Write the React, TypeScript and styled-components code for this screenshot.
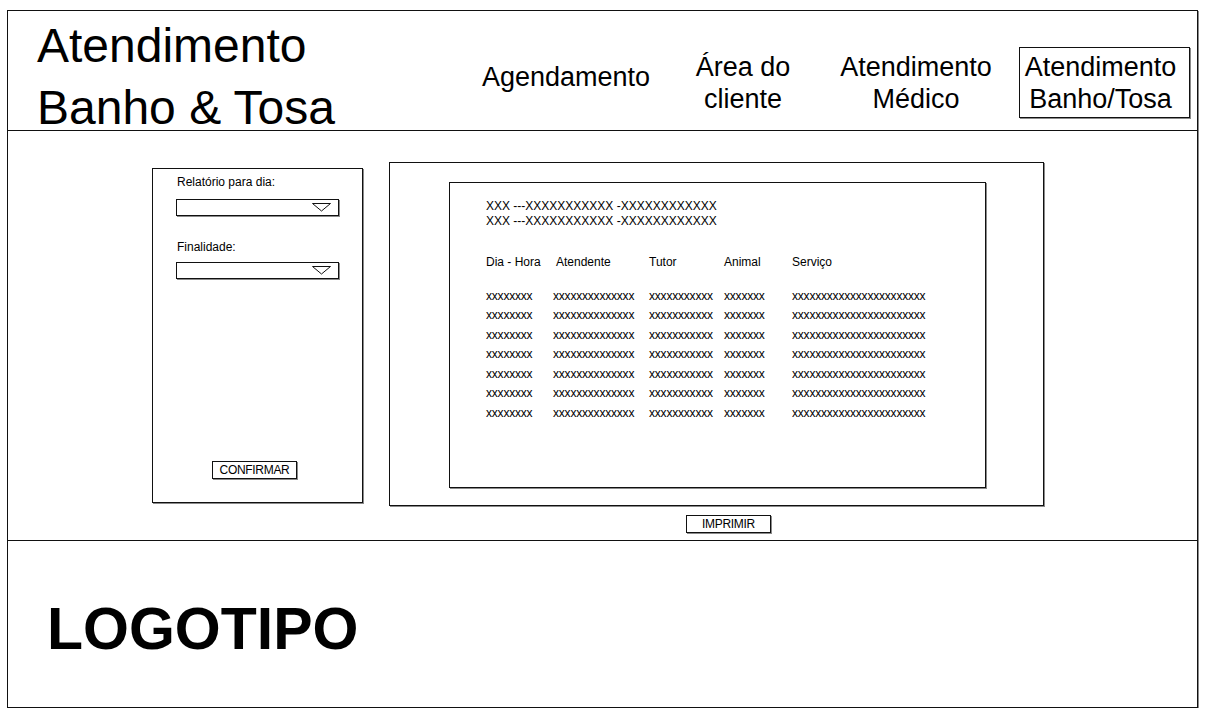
import React from "react";
import styled, { createGlobalStyle } from "styled-components";

const GlobalStyle = createGlobalStyle`
  html, body {
    margin: 0;
    padding: 0;
    background: #fff;
  }
  body {
    font-family: "Liberation Sans", Arial, sans-serif;
    color: #000;
  }
`;

const Frame = styled.div`
  box-sizing: border-box;
  width: 1191px;
  height: 698px;
  margin: 10px 0 0 7px;
  border: 1px solid #111;
  box-shadow: 1px 1px 0 #8a8a8a;
  display: flex;
  flex-direction: column;
`;

const Header = styled.header`
  box-sizing: border-box;
  height: 120px;
  flex-shrink: 0;
  border-bottom: 1px solid #111;
  display: flex;
  justify-content: space-between;
  padding: 0 7px 0 29px;
`;

const Title = styled.h1`
  margin: 0;
  padding-top: 4px;
  font-size: 48px;
  font-weight: 400;
  line-height: 62px;
  white-space: nowrap;
  span {
    display: block;
  }
`;

const Nav = styled.nav`
  display: flex;
  align-items: center;
  align-self: flex-end;
  margin-bottom: 12px;
`;

const NavItem = styled.div<{ $w: number; $active?: boolean; $lift?: number }>`
  box-sizing: border-box;
  width: ${(p) => p.$w}px;
  font-size: 27px;
  line-height: 32px;
  text-align: center;
  white-space: nowrap;
  margin-bottom: ${(p) => p.$lift ?? 0}px;
  ${(p) =>
    p.$active &&
    `
    border: 1px solid #111;
    box-shadow: 1px 1px 0 #8a8a8a;
    padding: 3px 8px 2px 0;
  `}
  span {
    display: block;
  }
`;

const Main = styled.main`
  box-sizing: border-box;
  height: 410px;
  flex-shrink: 0;
  border-bottom: 1px solid #111;
  display: flex;
  align-items: flex-start;
  gap: 26px;
  padding-left: 144px;
`;

const FilterPanel = styled.section`
  box-sizing: border-box;
  width: 211px;
  height: 335px;
  margin-top: 37px;
  border: 1px solid #111;
  box-shadow: 1px 1px 0 #8a8a8a;
  padding: 6px 0 0 23px;
  display: flex;
  flex-direction: column;
  align-items: flex-start;
`;

const Label = styled.div<{ $mt?: number }>`
  font-size: 12px;
  line-height: 14px;
  margin-top: ${(p) => p.$mt ?? 0}px;
  padding-left: 1px;
`;

const Select = styled.div<{ $mt: number }>`
  box-sizing: border-box;
  width: 163px;
  height: 17px;
  margin-top: ${(p) => p.$mt}px;
  border: 1px solid #111;
  box-shadow: 1px 1px 0 #8a8a8a;
  display: flex;
  align-items: center;
  justify-content: flex-end;
  padding-right: 7px;
`;

const Button = styled.div`
  box-sizing: border-box;
  width: 85px;
  height: 18px;
  border: 1px solid #111;
  box-shadow: 1px 1px 0 #8a8a8a;
  font-size: 12px;
  line-height: 16px;
  text-align: center;
  letter-spacing: -0.3px;
`;

const ConfirmButton = styled(Button)`
  margin-top: auto;
  margin-bottom: 23px;
  margin-left: 36px;
`;

const ReportColumn = styled.div`
  margin-top: 31px;
  display: flex;
  flex-direction: column;
`;

const ReportFrame = styled.section`
  box-sizing: border-box;
  width: 655px;
  height: 344px;
  border: 1px solid #111;
  box-shadow: 1px 1px 0 #8a8a8a;
  padding: 19px 0 0 59px;
`;

const Report = styled.div`
  box-sizing: border-box;
  width: 537px;
  height: 306px;
  border: 1px solid #111;
  box-shadow: 1px 1px 0 #8a8a8a;
  padding: 16px 0 0 36px;
  font-size: 12px;
`;

const InfoLine = styled.div`
  line-height: 15px;
  white-space: nowrap;
`;

const Grid = styled.div<{ $mt: number; $row: number }>`
  display: grid;
  grid-template-columns: 67px 96px 75px 68px auto;
  grid-auto-rows: ${(p) => p.$row}px;
  align-items: center;
  margin-top: ${(p) => p.$mt}px;
  white-space: nowrap;
`;

const HeadCell = styled.div<{ $dx?: number }>`
  padding-left: ${(p) => p.$dx ?? 0}px;
`;

const DataCell = styled.div`
  font-size: 12px;
  letter-spacing: -0.2px;
`;

const PrintRow = styled.div`
  margin-top: 9px;
  padding-left: 297px;
`;

const Footer = styled.footer`
  flex: 1;
  display: flex;
  align-items: center;
  padding: 10px 0 0 39px;
`;

const Logo = styled.div`
  font-size: 59px;
  font-weight: 700;
  line-height: 1;
`;

const Arrow = () => (
  <svg width="19" height="9" viewBox="0 0 19 9">
    <polygon points="0.5,0.5 18.5,0.5 9.5,8" fill="none" stroke="#111" strokeWidth="1" />
  </svg>
);

const columns: [string, number][] = [
  ["Dia - Hora", 0],
  ["Atendente", 3],
  ["Tutor", 0],
  ["Animal", 0],
  ["Serviço", 0],
];
const widths = [8, 14, 11, 7, 23];
const rows = Array.from({ length: 7 });

export default function App() {
  return (
    <>
      <GlobalStyle />
      <Frame>
        <Header>
          <Title>
            <span>Atendimento</span>
            <span>Banho &amp; Tosa</span>
          </Title>
          <Nav>
            <NavItem $w={214} $lift={12}>
              Agendamento
            </NavItem>
            <NavItem $w={140}>
              <span>Área do</span>
              <span>cliente</span>
            </NavItem>
            <NavItem $w={206}>
              <span>Atendimento</span>
              <span>Médico</span>
            </NavItem>
            <NavItem $w={171} $active>
              <span>Atendimento</span>
              <span>Banho/Tosa</span>
            </NavItem>
          </Nav>
        </Header>

        <Main>
          <FilterPanel>
            <Label>Relatório para dia:</Label>
            <Select $mt={10}>
              <Arrow />
            </Select>
            <Label $mt={24}>Finalidade:</Label>
            <Select $mt={8}>
              <Arrow />
            </Select>
            <ConfirmButton>CONFIRMAR</ConfirmButton>
          </FilterPanel>

          <ReportColumn>
            <ReportFrame>
              <Report>
                <InfoLine>XXX ---XXXXXXXXXXX -XXXXXXXXXXXX</InfoLine>
                <InfoLine>XXX ---XXXXXXXXXXX -XXXXXXXXXXXX</InfoLine>
                <Grid $mt={25} $row={15}>
                  {columns.map(([c, dx]) => (
                    <HeadCell key={c} $dx={dx}>
                      {c}
                    </HeadCell>
                  ))}
                </Grid>
                <Grid $mt={17} $row={19.5}>
                  {rows.map((_, r) =>
                    widths.map((n, c) => <DataCell key={`${r}-${c}`}>{"x".repeat(n)}</DataCell>)
                  )}
                </Grid>
              </Report>
            </ReportFrame>
            <PrintRow>
              <Button>IMPRIMIR</Button>
            </PrintRow>
          </ReportColumn>
        </Main>

        <Footer>
          <Logo>LOGOTIPO</Logo>
        </Footer>
      </Frame>
    </>
  );
}
